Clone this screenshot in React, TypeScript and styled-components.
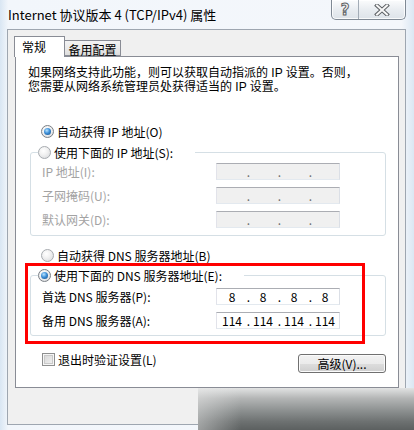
import React from "react";
import styled, { createGlobalStyle, css } from "styled-components";

const GlobalStyle = createGlobalStyle`
  html, body {
    margin: 0;
    padding: 0;
    background: #eaf1f8;
  }
  body {
    font-family: "Noto Sans CJK SC", "Noto Sans", sans-serif;
    font-size: 12px;
    color: #000;
  }
`;

const Window = styled.div`
  position: relative;
  width: 414px;
  height: 430px;
  overflow: hidden;
  background: linear-gradient(90deg, #d9e6f3 0%, #f2f6fb 2%, #f4f7fb 97%, #dbe7f3 100%);
`;

const TitleBar = styled.div`
  display: flex;
  align-items: flex-start;
  height: 29px;
  padding-left: 8px;
`;

const Title = styled.div`
  margin-top: 7px;
  font-size: 13px;
  line-height: 16px;
  color: #000;
  white-space: nowrap;
`;

const CaptionButtons = styled.div`
  display: flex;
  margin-left: auto;
  margin-right: 8px;
  height: 19px;
  border: 1px solid #7f8994;
  border-top: none;
  border-radius: 0 0 5px 5px;
  overflow: hidden;
  background: linear-gradient(#fbfcfd, #e9edf1 50%, #dde3e9);
  box-shadow: inset 0 0 0 1px rgba(255, 255, 255, 0.8);
`;

const CaptionButton = styled.div<{ $w: number }>`
  width: ${(p) => p.$w}px;
  display: flex;
  align-items: center;
  justify-content: center;
  & + & {
    border-left: 1px solid #a3acb6;
  }
`;

const HelpGlyph = styled.span`
  font-family: "DejaVu Sans", sans-serif;
  font-size: 15px;
  font-weight: bold;
  line-height: 16px;
  color: #f7f7f7;
  -webkit-text-stroke: 1px #5e6266;
`;

const Client = styled.div`
  margin-left: 7px;
  width: 399px;
  height: 396px;
  box-sizing: border-box;
  border: 1px solid #9ea6b0;
  background: #f0f0f0;
  padding: 6px 6px 0 7px;
`;

const TabStrip = styled.div`
  display: flex;
  align-items: flex-end;
  height: 21px;
  margin-left: -1px;
  margin-bottom: -1px;
  position: relative;
  z-index: 1;
`;

const Tab = styled.div<{ $active?: boolean }>`
  box-sizing: border-box;
  border: 1px solid #898c95;
  ${(p) =>
    p.$active
      ? css`
          width: 51px;
          height: 21px;
          border-bottom: none;
          background: #fff;
          padding-left: 7px;
          line-height: 20px;
        `
      : css`
          width: 56px;
          height: 16px;
          margin-bottom: 1px;
          border-left: none;
          background: linear-gradient(#f3f3f3, #ebebeb 50%, #dddddd);
          text-align: center;
          line-height: 17px;
        `}
`;

const Panel = styled.div`
  height: 332px;
  box-sizing: border-box;
  border: 1px solid #898c95;
  background: #fff;
  padding: 9px 12px 0 12px;
  display: flex;
  flex-direction: column;
`;

const DescLine = styled.div`
  height: 14px;
  line-height: 14px;
  font-family: "Liberation Sans", "Noto Sans CJK SC", sans-serif;
  white-space: nowrap;
`;

const OptionRow = styled.div<{ $top: number; $left?: number }>`
  display: flex;
  align-items: center;
  height: 16px;
  margin-top: ${(p) => p.$top}px;
  margin-left: ${(p) => p.$left ?? 0}px;
  gap: 3px;
  white-space: nowrap;
`;

const Radio = styled.span<{ $checked?: boolean }>`
  position: relative;
  width: 13px;
  height: 13px;
  box-sizing: border-box;
  border-radius: 50%;
  border: 1px solid ${(p) => (p.$checked ? "#7a7f86" : "#a7abb0")};
  background: radial-gradient(circle at 40% 35%, #ffffff 0%, #f2f2f2 40%, #d4d6d9 100%);
  flex: none;
  ${(p) =>
    p.$checked &&
    css`
      &::after {
        content: "";
        position: absolute;
        left: 2px;
        top: 2px;
        width: 7px;
        height: 7px;
        border-radius: 50%;
        background: radial-gradient(circle at 40% 35%, #b8e4ff 0%, #3d8fd8 45%, #10487f 100%);
      }
    `}
`;

const Group = styled.fieldset<{ $top: number; $pb: number }>`
  margin: ${(p) => p.$top}px 0 0 2px;
  width: 356px;
  box-sizing: border-box;
  border: 1px solid #d5dfe5;
  border-radius: 3px;
  padding: 3px 0 ${(p) => p.$pb}px 7px;
  min-width: 0;
`;

const GroupLegend = styled.legend`
  display: flex;
  align-items: center;
  gap: 3px;
  height: 16px;
  padding: 0 22px 0 0;
  white-space: nowrap;
`;

const FieldGrid = styled.div<{ $pt?: number }>`
  display: grid;
  grid-template-columns: 174px 124px;
  row-gap: 7px;
  padding-left: 4px;
  padding-top: ${(p) => p.$pt ?? 0}px;
`;

const FieldLabel = styled.div<{ $disabled?: boolean }>`
  height: 17px;
  line-height: 17px;
  color: ${(p) => (p.$disabled ? "#a3a3a3" : "#000")};
  white-space: nowrap;
`;

const IpBox = styled.div<{ $disabled?: boolean }>`
  display: flex;
  width: 124px;
  height: 17px;
  box-sizing: border-box;
  border: 1px solid;
  border-color: #abadb3 #dbdfe6 #e3e9ef #e2e3ea;
  background: ${(p) => (p.$disabled ? "#f0f0f0" : "#fff")};
  padding-left: 3px;
  line-height: 15px;
  color: ${(p) => (p.$disabled ? "#6d6d6d" : "#000")};
`;

const Octet = styled.span`
  width: 24px;
  text-align: center;
`;

const Dot = styled.span`
  width: 7px;
  text-align: right;
  padding-right: 1px;
  box-sizing: border-box;
`;

const BottomRow = styled.div`
  display: flex;
  align-items: flex-start;
  margin-top: 15px;
`;

const CheckRow = styled.label`
  display: flex;
  align-items: center;
  gap: 3px;
  height: 16px;
  margin-left: 14px;
`;

const CheckBox = styled.span`
  width: 13px;
  height: 13px;
  box-sizing: border-box;
  border: 1px solid #8e8f8f;
  background: linear-gradient(135deg, #d4d4d4, #f4f4f4);
  box-shadow: inset 0 0 0 1px #f6f6f6, inset 0 0 0 2px #c9c9c9;
`;

const AdvancedButton = styled.button`
  margin: 3px 0 0 auto;
  width: 88px;
  height: 19px;
  box-sizing: border-box;
  border: 1px solid #707070;
  border-radius: 3px;
  background: linear-gradient(#f2f2f2 0%, #ebebeb 50%, #dddddd 51%, #cfcfcf 100%);
  box-shadow: inset 0 0 0 1px #fbfbfb;
  font-family: inherit;
  font-size: 12px;
  line-height: 15px;
  padding: 0;
  color: #000;
`;

const Annotation = styled.div`
  position: absolute;
  left: 25px;
  top: 263px;
  width: 340px;
  height: 81px;
  box-sizing: border-box;
  border: 3px solid #ff0000;
  pointer-events: none;
`;

// darkened strip over the lower right corner
const CornerShade = styled.div`
  position: absolute;
  left: 198px;
  top: 388px;
  right: 0;
  bottom: 0;
  background:
    linear-gradient(90deg, rgba(236, 236, 236, 0.45) 0%, rgba(236, 236, 236, 0) 20%),
    linear-gradient(180deg, #e2e3e3 0%, #b3b5b5 25%, #8b8f8f 55%, #6d7171 80%, #5c6060 100%);
`;

const IpField: React.FC<{ octets?: string[]; disabled?: boolean }> = ({ octets = ["", "", "", ""], disabled }) => (
  <IpBox $disabled={disabled}>
    {octets.map((o, i) => (
      <React.Fragment key={i}>
        <Octet>{o}</Octet>
        {i < 3 && <Dot>.</Dot>}
      </React.Fragment>
    ))}
  </IpBox>
);

const CloseGlyph = () => (
  <svg width="16" height="12" viewBox="0 0 16 12">
    <path d="M3 1.5 L13 10.5 M13 1.5 L3 10.5" stroke="#5e6266" strokeWidth="4" strokeLinecap="square" />
    <path d="M3 1.5 L13 10.5 M13 1.5 L3 10.5" stroke="#f7f7f7" strokeWidth="2" strokeLinecap="square" />
  </svg>
);

const App: React.FC = () => (
  <>
    <GlobalStyle />
    <Window>
      <TitleBar>
        <Title>Internet 协议版本 4 (TCP/IPv4) 属性</Title>
        <CaptionButtons>
          <CaptionButton $w={26}>
            <HelpGlyph>?</HelpGlyph>
          </CaptionButton>
          <CaptionButton $w={46}>
            <CloseGlyph />
          </CaptionButton>
        </CaptionButtons>
      </TitleBar>

      <Client>
        <TabStrip>
          <Tab $active>常规</Tab>
          <Tab>备用配置</Tab>
        </TabStrip>

        <Panel>
          <DescLine>如果网络支持此功能，则可以获取自动指派的 IP 设置。否则，</DescLine>
          <DescLine>您需要从网络系统管理员处获得适当的 IP 设置。</DescLine>

          <OptionRow $top={29} $left={13}>
            <Radio $checked />
            自动获得 IP 地址(O)
          </OptionRow>

          <Group $top={5} $pb={7}>
            <GroupLegend>
              <Radio />
              使用下面的 IP 地址(S):
            </GroupLegend>
            <FieldGrid>
              <FieldLabel $disabled>IP 地址(I):</FieldLabel>
              <IpField disabled />
              <FieldLabel $disabled>子网掩码(U):</FieldLabel>
              <IpField disabled />
              <FieldLabel $disabled>默认网关(D):</FieldLabel>
              <IpField disabled />
            </FieldGrid>
          </Group>

          <OptionRow $top={11} $left={13}>
            <Radio />
            自动获得 DNS 服务器地址(B)
          </OptionRow>

          <Group $top={4} $pb={6}>
            <GroupLegend>
              <Radio $checked />
              使用下面的 DNS 服务器地址(E):
            </GroupLegend>
            <FieldGrid $pt={2}>
              <FieldLabel>首选 DNS 服务器(P):</FieldLabel>
              <IpField octets={["8", "8", "8", "8"]} />
              <FieldLabel>备用 DNS 服务器(A):</FieldLabel>
              <IpField octets={["114", "114", "114", "114"]} />
            </FieldGrid>
          </Group>

          <BottomRow>
            <CheckRow>
              <CheckBox />
              退出时验证设置(L)
            </CheckRow>
            <AdvancedButton>高级(V)...</AdvancedButton>
          </BottomRow>
        </Panel>
      </Client>

      <Annotation />
      <CornerShade />
    </Window>
  </>
);

export default App;
